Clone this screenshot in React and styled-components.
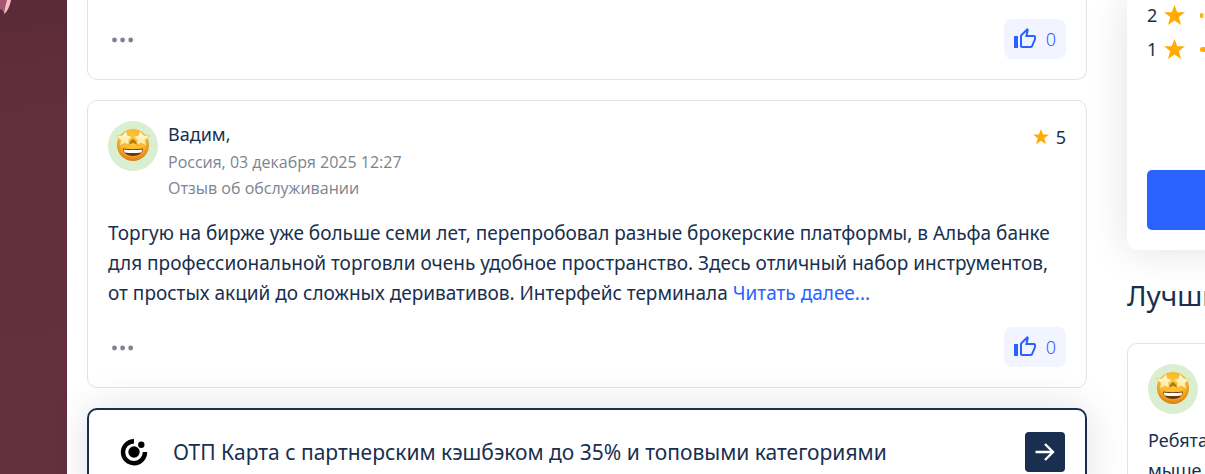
import React from 'react';
import styled, { createGlobalStyle } from 'styled-components';

const GlobalStyle = createGlobalStyle`
  * {
    box-sizing: border-box;
  }
  body {
    margin: 0;
    background: #fff;
    color: #182f4f;
    font-family: 'Noto Sans', 'Open Sans', sans-serif;
    font-size: 19px;
    line-height: 30px;
  }
  button {
    font: inherit;
    border: 0;
    padding: 0;
    cursor: pointer;
  }
`;

const Page = styled.div`
  display: flex;
  height: 100vh;
  overflow: hidden;
`;

const Backdrop = styled.div`
  flex: 0 0 67px;
  background: linear-gradient(170deg, #5b2a38 0%, #612e3d 25%, #643040 100%);

  svg {
    display: block;
  }
`;

const Content = styled.div`
  flex: 1;
  min-width: 0;
  display: grid;
  grid-template-columns: minmax(0, 1fr) 78px;
  align-items: start;
  column-gap: 40px;
  padding-left: 20px;
`;

const Reviews = styled.main`
  display: flex;
  flex-direction: column;
  gap: 20px;
`;

const Card = styled.article`
  padding: 20px;
  border: 1px solid #e3e4e6;
  border-radius: 10px;
  background: #fff;

  ${(props) => props.$continued && `
    padding-top: 19px;
    border-top: 0;
    border-top-left-radius: 0;
    border-top-right-radius: 0;
  `}
`;

const CardHead = styled.header`
  display: flex;
  gap: 10px;
  margin-bottom: 17px;
`;

const Avatar = styled.div`
  flex: 0 0 50px;
  width: 50px;
  height: 50px;
  border-radius: 50%;
  background: #d9efcf;
`;

const Author = styled.div`
  flex: 1;
  line-height: 26px;
`;

const Name = styled.div`
  margin-bottom: 2px;
  font-size: 18px;
`;

const Meta = styled.div`
  color: #7b8490;
  font-family: 'Open Sans', 'Noto Sans', sans-serif;
  font-size: 16px;
`;

const Score = styled.div`
  display: flex;
  align-items: center;
  gap: 7px;
  height: 32px;
  font-size: 18px;
`;

const ReviewText = styled.p`
  margin: 0;
`;

const ReadMore = styled.a`
  color: #2962ff;
  text-decoration: none;
`;

const CardFoot = styled.footer`
  display: flex;
  justify-content: space-between;
  align-items: center;
  margin-top: ${(props) => (props.$flush ? '0' : '19px')};
`;

const MoreButton = styled.button`
  display: flex;
  align-items: center;
  width: 30px;
  height: 40px;
  background: none;
`;

const LikeButton = styled.button`
  display: flex;
  align-items: center;
  gap: 9px;
  height: 40px;
  padding: 0 10px 0 9px;
  border-radius: 8px;
  background: #f2f5ff;
  color: #2962ff;
  font-size: 18px;
  font-weight: 300;
`;

const Promo = styled.section`
  display: flex;
  align-items: center;
  gap: 25px;
  padding: 22px 20px 22px 31px;
  border: 2px solid #182f4f;
  border-radius: 10px;
  background: #fff;
  box-shadow: 0 0 40px rgba(0, 0, 0, 0.12);
`;

const PromoTitle = styled.div`
  flex: 1;
  font-size: 21px;
`;

const PromoButton = styled.button`
  display: flex;
  align-items: center;
  justify-content: center;
  width: 40px;
  height: 40px;
  border-radius: 4px;
  background: #182f4f;
`;

const Sidebar = styled.aside`
  width: 320px;
`;

const RatingPanel = styled.section`
  display: flex;
  flex-direction: column;
  gap: 4px;
  padding: 0 20px 20px;
  border-radius: 0 0 10px 10px;
  background: #fff;
  box-shadow: 0 0 40px rgba(0, 0, 0, 0.12);
`;

const RatingRow = styled.div`
  display: flex;
  align-items: center;
  gap: 7px;
  height: 30px;
  font-size: 18px;
`;

const Track = styled.div`
  flex: 1;
  height: 5px;
  margin-left: 8px;
  border-radius: 3px;
  background: #eeeff2;
`;

const Fill = styled.div`
  height: 100%;
  border-radius: 3px;
  background: #ffab00;
`;

const RateButton = styled.button`
  height: 60px;
  margin-top: 102px;
  border-radius: 5px;
  background: #2962ff;
`;

const SideTitle = styled.h2`
  margin: 25px 0 28px;
  font-size: 28px;
  font-weight: 400;
  line-height: 40px;
`;

const SideText = styled.p`
  width: 60px;
  margin: 11px 0 0;
  font-size: 18px;
`;

const Star = ({ size }) => (
  <svg width={size} height={size} viewBox="0 0 20 20" fill="#ffab00" aria-hidden="true">
    <path d="M10 0 12.6 7H20l-5.9 4.5L16.2 19 10 14.7 3.8 19l2.1-7.5L0 7h7.4z" />
  </svg>
);

const Dots = () => (
  <svg width="30" height="8" viewBox="0 0 30 8" fill="#7b8490" aria-hidden="true">
    <circle cx="6.5" cy="5" r="2.4" />
    <circle cx="14.6" cy="5" r="2.4" />
    <circle cx="22.7" cy="5" r="2.4" />
  </svg>
);

const Thumb = () => (
  <svg width="24" height="24" viewBox="0 0 24 24" fill="#2962ff" aria-hidden="true">
    <path d="M1 9h4v12H1z" />
    <path d="M21 8h-6.3l1-4.6V3c0-.4-.2-.8-.4-1.1L14.2 1 7.6 7.6C7.2 8 7 8.5 7 9v10c0 1.1.9 2 2 2h9c.8 0 1.5-.5 1.8-1.2l3-7.1c.1-.2.2-.5.2-.7v-2c0-1.100-.9-2-2-2zm0 4-3 7H9V9l4.300-4.300L12.200 10H21z" />
  </svg>
);

const Arrow = () => (
  <svg width="24" height="24" viewBox="0 0 24 24" fill="none" stroke="#fff" strokeWidth="2.4" aria-hidden="true">
    <path d="M2.5 12h17M12 4l8 8-8 8" />
  </svg>
);

const BankLogo = () => (
  <svg width="28" height="28" viewBox="0 0 28 28" aria-hidden="true">
    <path d="M14 3.2A11 11 0 1 0 25 14" fill="none" stroke="#000" strokeWidth="4.4" />
    <circle cx="14" cy="14" r="5.7" />
    <circle cx="21.3" cy="6.7" r="3.2" />
  </svg>
);

const StarStruck = () => (
  <svg width="50" height="50" viewBox="0 0 50 50" aria-hidden="true">
    <defs>
      <radialGradient id="face" cx="50%" cy="38%" r="62%">
        <stop offset="0" stopColor="#ffd02f" />
        <stop offset="0.65" stopColor="#f9b52b" />
        <stop offset="1" stopColor="#dc7812" />
      </radialGradient>
      <linearGradient id="eye" x1="0" y1="0" x2="0" y2="1">
        <stop offset="0" stopColor="#fffbe6" />
        <stop offset="1" stopColor="#ffe98c" />
      </linearGradient>
    </defs>
    <circle cx="25" cy="24" r="16" fill="url(#face)" />
    <path d="M20 25q2-6 5-7 3 1 5 7-2-2.500-5-3-3 .5-5 3z" fill="#a9650c" opacity="0.8" />
    <path d="M15 27.500q10 1.500 20 0c0 4.500-4.500 7.500-10 7.500s-10-3-10-7.500z" fill="#6b3411" />
    <path d="M15.800 28.400q9.200 1.400 18.400 0-.2 1.800-1 3-8.200 1.200-16.400 0-.8-1.200-1-3z" fill="#fff" />
    <g fill="url(#eye)" stroke="#e0a53a" strokeWidth="0.4" strokeLinejoin="round">
      <path d="m18.200 10 1.500 4.600 4.400.8-3.500 3.600.8 5.200-4.600-2.200-5 2.800 1-5.600L8.400 15l5.800-.7z" />
      <path d="m31.800 10-1.500 4.600-4.400.8 3.500 3.600-.8 5.200 4.600-2.200 5 2.800-1-5.600 4.400-4.200-5.800-.7z" />
    </g>
  </svg>
);

const Petal = () => (
  <svg width="40" height="20" viewBox="0 0 40 20" aria-hidden="true">
    <path d="M0 0h11Q9 10 4 14 4 10 0 9z" fill="#a65672" />
    <path d="M7 0h4Q9 10 4 14 5 7 7 0z" fill="#f0c1bd" />
  </svg>
);

const Like = ({ count }) => (
  <LikeButton type="button" aria-label="Нравится">
    <Thumb />
    {count}
  </LikeButton>
);

const More = () => (
  <MoreButton type="button" aria-label="Ещё">
    <Dots />
  </MoreButton>
);

const ratings = [
  { stars: 2, share: 1 },
  { stars: 1, share: 12 },
];

const App = () => {
  return (
    <>
      <GlobalStyle />
      <Page>
        <Backdrop>
          <Petal />
        </Backdrop>
        <Content>
          <Reviews>
            <Card $continued>
              <CardFoot $flush>
                <More />
                <Like count={0} />
              </CardFoot>
            </Card>

            <Card>
              <CardHead>
                <Avatar>
                  <StarStruck />
                </Avatar>
                <Author>
                  <Name>Вадим,</Name>
                  <Meta>Россия, 03 декабря 2025 12:27</Meta>
                  <Meta>Отзыв об обслуживании</Meta>
                </Author>
                <Score>
                  <Star size={16} />5
                </Score>
              </CardHead>
              <ReviewText>
                Торгую на бирже уже больше семи лет, перепробовал разные брокерские платформы, в Альфа банке
                для профессиональной торговли очень удобное пространство. Здесь отличный набор инструментов,
                от простых акций до сложных деривативов. Интерфейс терминала{' '}
                <ReadMore href="#review">Читать далее...</ReadMore>
              </ReviewText>
              <CardFoot>
                <More />
                <Like count={0} />
              </CardFoot>
            </Card>

            <Promo>
              <BankLogo />
              <PromoTitle>ОТП Карта с партнерским кэшбэком до 35% и топовыми категориями</PromoTitle>
              <PromoButton type="button" aria-label="Перейти">
                <Arrow />
              </PromoButton>
            </Promo>
          </Reviews>

          <Sidebar>
            <RatingPanel>
              {ratings.map((row) => (
                <RatingRow key={row.stars}>
                  {row.stars}
                  <Star size={21} />
                  <Track>
                    <Fill style={{ width: `${row.share}%` }} />
                  </Track>
                </RatingRow>
              ))}
              <RateButton type="button" aria-label="Оставить отзыв" />
            </RatingPanel>
            <SideTitle>Лучшие</SideTitle>
            <Card>
              <Avatar>
                <StarStruck />
              </Avatar>
              <SideText>Ребята мыше</SideText>
            </Card>
          </Sidebar>
        </Content>
      </Page>
    </>
  );
};

export default App;
